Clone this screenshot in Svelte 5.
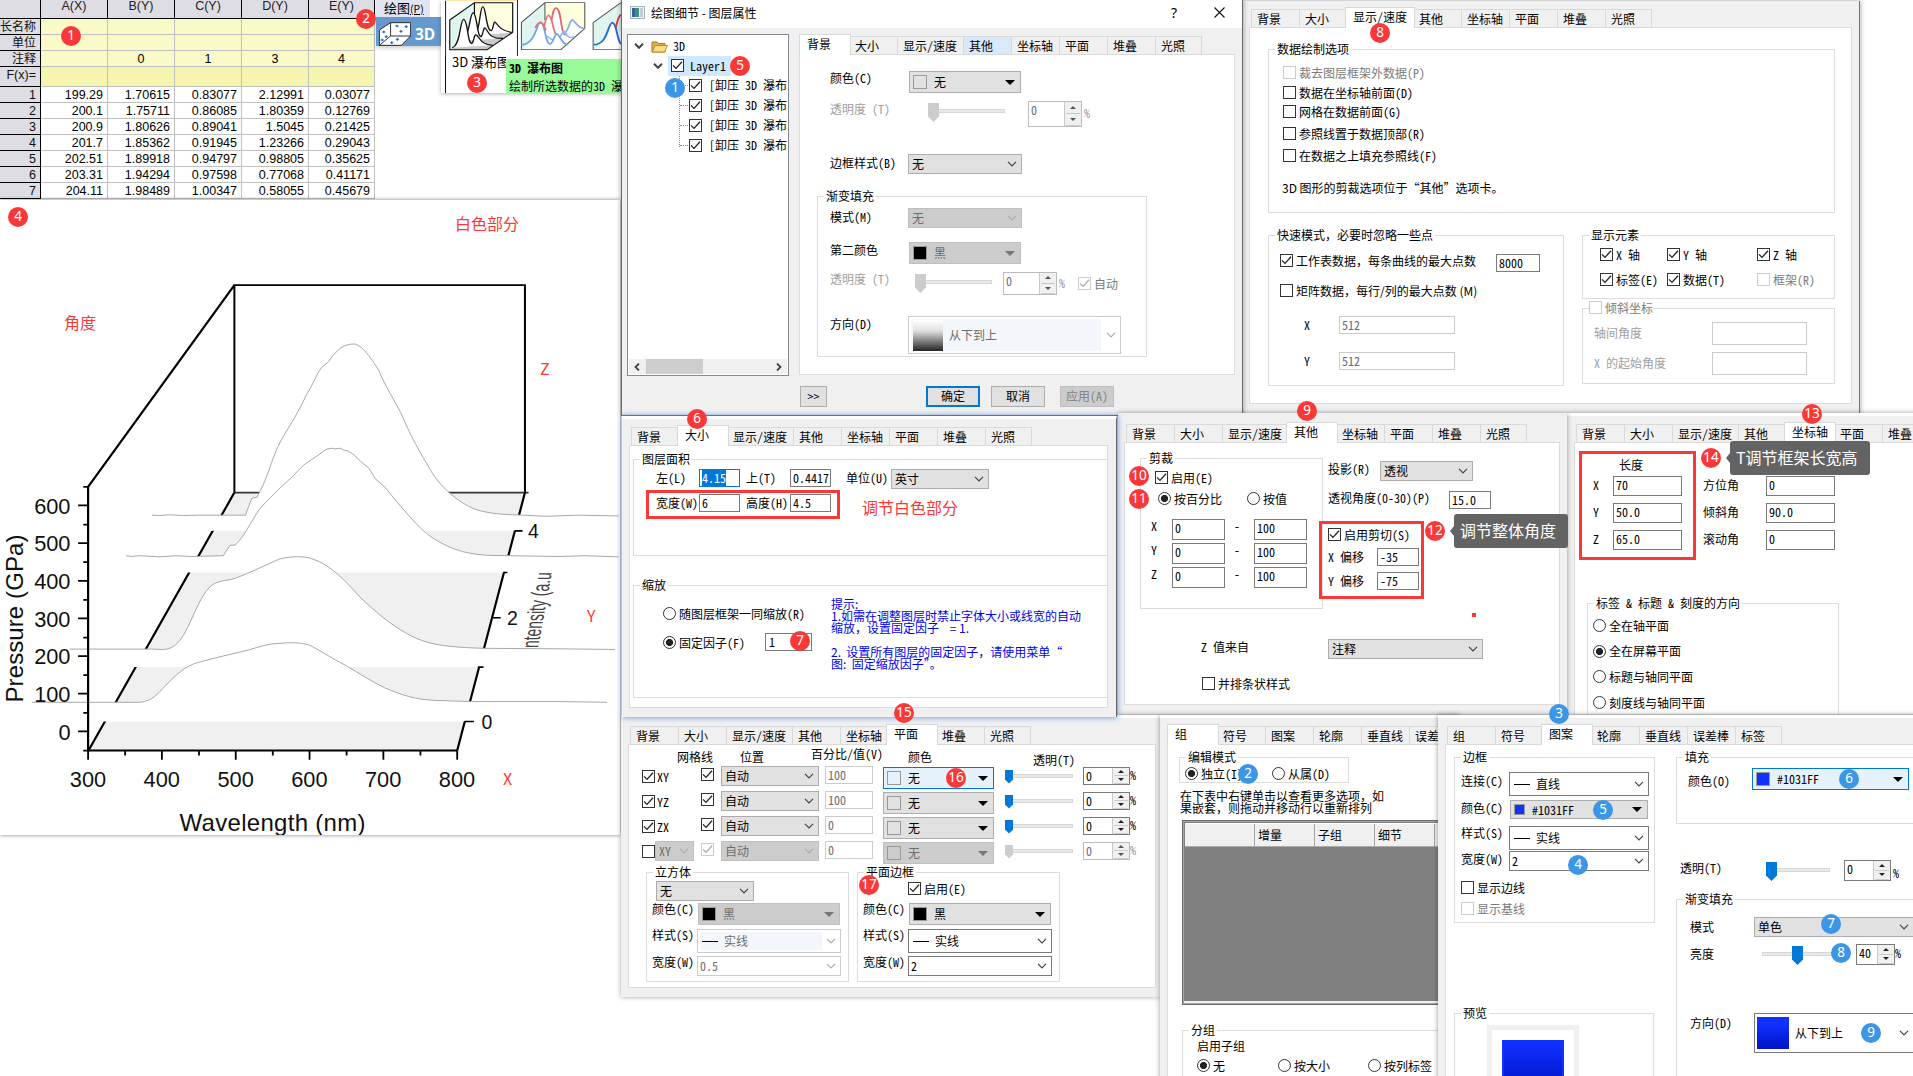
<script>
  const layerTabs = ['背景', '大小', '显示/速度', '其他', '坐标轴', '平面', '堆叠', '光照'];
  const groupTabs = ['组', '符号', '图案', '轮廓', '垂直线', '误差棒'];
  const patternTabs = ['组', '符号', '图案', '轮廓', '垂直线', '误差棒', '标签'];

  const columns = ['A(X)', 'B(Y)', 'C(Y)', 'D(Y)', 'E(Y)'];
  const notes = ['', '0', '1', '3', '4'];
  const data = [
    ['199.29', '1.70615', '0.83077', '2.12991', '0.03077'],
    ['200.1', '1.75711', '0.86085', '1.80359', '0.12769'],
    ['200.9', '1.80626', '0.89041', '1.5045', '0.21425'],
    ['201.7', '1.85362', '0.91945', '1.23266', '0.29043'],
    ['202.51', '1.89918', '0.94797', '0.98805', '0.35625'],
    ['203.31', '1.94294', '0.97598', '0.77068', '0.41171'],
    ['204.11', '1.98489', '1.00347', '0.58055', '0.45679']
  ];

  // Curves of the waterfall plot, back to front: outline, left x, right x, lower edge of the mask
  const curves = [
    { d: 'M381 719 L400 720 L425 718 L460 720 L500 719 L560 719 L616 719 L624 696 L632 675 L645 672 L653 655 C670 622 682 575 695 545 C715 500 740 470 770 402 C785 378 795 350 805 335 L824 318 L835 302 L852 284 L865 276 L880 272 L893 272 L907 281 C925 300 935 315 950 340 C965 380 990 420 1005 450 C1035 525 1060 565 1085 610 C1110 650 1150 685 1190 703 C1230 717 1270 717 1310 719 L1370 722 L1450 719 L1552 721', l: 381, r: 1552, b: 760 },
    { d: 'M316 825 L330 827 L350 825 L400 828 L440 825 L480 827 L560 825 L577 798 L590 797 C610 780 630 735 650 705 C670 680 700 650 735 617 C755 595 760 588 780 575 L800 561 L818 547 L833 544 L840 546 L853 544 L862 549 L875 552 L890 563 L905 579 L925 596 L942 624 L965 645 C1000 690 1040 740 1070 767 C1120 805 1160 820 1225 824 L1400 827 L1470 825 L1552 828', l: 316, r: 1552, b: 869 },
    { d: 'M175 1069 L380 1069 L410 1070 C440 1069 455 1045 472 1010 C490 970 505 930 525 908 C545 888 565 892 590 884 C630 868 670 848 700 834 C730 826 765 825 785 834 C830 848 870 895 905 935 C940 970 980 1005 1020 1028 C1070 1058 1120 1064 1215 1067 L1380 1068 L1543 1070', l: 175, r: 1543, b: 1116 },
    { d: 'M80 1208 L350 1208 C385 1205 395 1185 415 1165 C440 1138 465 1112 497 1104 L540 1092 L625 1071 C650 1063 670 1055 700 1054 C730 1051 755 1052 775 1058 C800 1070 830 1092 868 1112 C900 1132 930 1152 965 1170 C1010 1190 1040 1200 1090 1203 L1180 1206 L1400 1206 L1523 1208', l: 80, r: 1523, b: 1258 }
  ];
  const zTicks = [0, 1, 2, 3, 4, 5, 6];
  const xTicks = [0, 1, 2, 3, 4, 5];

  const planes = [
    { name: 'XY', pct: '100', hot: true },
    { name: 'YZ', pct: '100' },
    { name: 'ZX', pct: '0' },
    { name: 'XY', pct: '0', off: true }
  ];

  const badges = [
    [71, 36, 1], [366, 19, 2], [477, 83, 3], [18, 217, 4], [740, 66, 5], [697, 419, 6], [800, 641, 7],
    [1380, 33, 8], [1307, 411, 9], [1139, 476, 10], [1139, 499, 11], [1435, 531, 12], [1812, 414, 13],
    [1711, 458, 14], [904, 713, 15], [956, 778, 16], [869, 885, 17]
  ];
  const steps = [
    [675, 88, 1], [1248, 774, 2], [1559, 714, 3], [1578, 865, 4], [1603, 810, 5],
    [1849, 779, 6], [1831, 924, 7], [1841, 953, 8], [1871, 1033, 9]
  ];
  const remarks = [
    [455, 214, '白色部分'], [64, 313, '角度'], [540, 359, 'Z'], [587, 606, 'Y'], [503, 769, 'X'], [862, 498, '调节白色部分']
  ];
  const frames = [
    [646, 490, 194, 29], [1319, 521, 105, 78], [1579, 451, 117, 109]
  ];
</script>

{#snippet tabs(list, active, hover = '')}
  <div class="tabs">
    {#each list as t}
      <div class="tab" class:wide={t.length > 4} class:active={t === active} class:hover={t === hover}>{t}</div>
    {/each}
  </div>
{/snippet}

{#snippet mark()}
  <svg width="11" height="11" viewBox="0 0 11 11"><path d="M1 5.4 L4 8.4 L10 1.8" /></svg>
{/snippet}

{#snippet check(text, on, off = false)}
  <span class="opt" class:off class:plain={text.includes('，')}><span class="box">{#if on}{@render mark()}{/if}</span>{text}</span>
{/snippet}

{#snippet radio(text, on)}
  <span class="opt"><span class="ring" class:on></span>{text}</span>
{/snippet}

{#snippet combo(text, cls = '')}
  <span class="combo {cls}">{text}<svg class="chev" width="10" height="6" viewBox="0 0 10 6"><path d="M1 .8 L5 4.8 L9 .8" /></svg></span>
{/snippet}

{#snippet dash(text, cls = '')}
  <span class="combo white tall {cls}"><span class="tint"><i class="stroke"></i>{text}</span><svg class="chev" width="10" height="6" viewBox="0 0 10 6"><path d="M1 .8 L5 4.8 L9 .8" /></svg></span>
{/snippet}

{#snippet colour(text, swatch, cls = '')}
  <span class="combo colour {cls}"><i class="sw {swatch}"></i>{text}<svg class="tri" width="10" height="5" viewBox="0 0 10 5"><path d="M0 0H10L5 5Z" /></svg></span>
{/snippet}

{#snippet slider(length, pos, small = false, off = false)}
  <svg class="slider" class:off width={length} height="20" viewBox="0 0 {length} 20">
    <rect class="track" x=".5" y={small ? 4.5 : 6.5} width={length - 1} height="3" />
    <path class="thumb" d={small ? `M${pos} 0h8v9.5l-4 4l-4-4z` : `M${pos} 0h11v13.5l-5.5 5.5l-5.5-5.5z`} />
  </svg>
{/snippet}

{#snippet spin(value, cls = '')}
  <span class="spin {cls}"><span class="val">{value}</span><span class="arrows">
    <i><svg width="6" height="3" viewBox="0 0 6 3"><path d="M0 3L3 0L6 3Z" /></svg></i>
    <i><svg width="6" height="3" viewBox="0 0 6 3"><path d="M0 0L3 3L6 0Z" /></svg></i>
  </span></span><span class="pct {cls}">%</span>
{/snippet}

<div class="desk">
  <!-- worksheet -->
  <div class="sheet">
    <div class="cell rh head"></div>
    {#each columns as c}<div class="cell head">{c}</div>{/each}
    {#each ['长名称', '单位'] as r}
      <div class="cell rh cn">{r}</div>
      {#each columns as c}<div class="cell note"></div>{/each}
    {/each}
    <div class="cell rh cn">注释</div>
    {#each notes as n}<div class="cell note">{n}</div>{/each}
    <div class="cell rh">F(x)=</div>
    {#each columns as c}<div class="cell note deep"></div>{/each}
    {#each data as row, i}
      <div class="cell rh">{i + 1}</div>
      {#each row as v}<div class="cell num">{v}</div>{/each}
    {/each}
  </div>

  <!-- plot menu -->
  <div class="menu">
    <div class="menu-title">绘图<small>(P)</small></div>
    <div class="menu-item">
      <svg width="32" height="24" viewBox="0 0 80 72" preserveAspectRatio="none">
        <path d="M1 24L29 2H79V42L56 70H1Z" fill="#fff" stroke="#222" stroke-width="2.5" />
        <path d="M29 2V42H79M29 42L1 70" fill="none" stroke="#222" stroke-width="2.5" />
        <path d="M12 26v8M8 30h8M18 40v8M14 44h8M8 50v8M4 54h8M45 8v8M41 12h8M68 10v8M64 14h8M55 24v8M51 28h8M46 48v8M42 52h8M32 58v8M28 62h8" stroke="#1a5fc4" stroke-width="3" />
      </svg>
      <b>3D</b>
    </div>
  </div>

  <div class="gallery">
    <svg class="thumbs" width="180" height="56" viewBox="1106 0 452 168" preserveAspectRatio="none">
      <path d="M1117.500 2V168M1298 0V168" stroke="#00007a" stroke-width="2.500" />
      <path d="M1119 1H1297" stroke="#ffe3a8" stroke-width="4" />
      <g stroke-linejoin="round">
        <path d="M1128 60L1190 8V92L1128 149Z" fill="#dff5f0" />
        <path d="M1190 8H1286V97L1222 92H1190Z" fill="#ffffe0" />
        <path d="M1128 149L1190 92L1286 97L1222 149Z" fill="#c9c9c9" />
        <path d="M1190 92V8H1286V97L1222 149H1128V60L1190 8" fill="none" stroke="#111" stroke-width="3" />
        <path d="M1187 108C1205 100 1203 20 1211 20C1219 20 1219 92 1232 92C1238 90 1237 64 1242 66C1250 78 1256 92 1284 97" fill="#fff" stroke="#111" stroke-width="3.4" />
        <path d="M1160 122C1178 112 1178 38 1187 38C1197 42 1196 112 1207 110C1213 100 1212 82 1217 84C1226 96 1228 118 1262 115" fill="#fff" stroke="#111" stroke-width="3.4" />
        <path d="M1134 143C1156 136 1153 58 1163 58C1174 60 1172 134 1184 130C1190 122 1188 102 1195 105C1206 116 1206 134 1236 136" fill="#fff" stroke="#111" stroke-width="3.4" />
        <path d="M1308 67L1367 8V92L1308 149Z" fill="#dff5f0" />
        <path d="M1367 8H1467V85L1400 92H1367Z" fill="#ffffe0" />
        <path d="M1367 8H1467V85L1407 149H1308V67L1367 8V60" fill="none" stroke="#555" stroke-width="2.6" />
        <path d="M1366 108C1386 104 1382 24 1395 24C1410 28 1405 100 1418 104C1428 96 1428 60 1436 60C1446 68 1448 84 1466 86" fill="#fff" stroke="#e0666e" stroke-width="4.5" />
        <path d="M1412 103C1428 96 1428 60 1436 60C1446 68 1448 84 1466 86" fill="#fff" stroke="#7fb2ee" stroke-width="4.5" />
        <path d="M1338 122C1368 112 1366 46 1376 46C1388 50 1386 110 1402 108" fill="#fff" stroke="#e8747c" stroke-width="4.5" />
        <path d="M1372 108C1392 130 1402 120 1414 92C1424 112 1430 116 1442 110" fill="none" stroke="#8fbcf0" stroke-width="4.5" />
        <path d="M1308 134C1344 134 1346 68 1356 66C1368 70 1368 134 1380 132C1390 126 1390 100 1398 102C1408 112 1408 132 1426 134" fill="#fff" stroke="#6ea3ea" stroke-width="4.5" />
        <path d="M1343 84C1349 66 1362 58 1369 92" fill="none" stroke="#ea6a70" stroke-width="4.5" />
        <path d="M1488 70L1558 10V92L1488 149Z" fill="#dff5f0" />
        <path d="M1558 8L1488 68V149H1558" fill="none" stroke="#555" stroke-width="2.6" />
        <path d="M1530 120C1546 110 1545 52 1558 44" fill="none" stroke="#e5383b" stroke-width="5" />
        <path d="M1490 134C1526 134 1524 68 1537 68C1548 72 1548 122 1558 132" fill="#fff" stroke="#1f6fd6" stroke-width="5" />
      </g>
    </svg>
    <div class="gallery-row">
      <div class="gallery-name">3D 瀑布图</div>
      <div class="hint"><b>3D 瀑布图</b><br />绘制所选数据的3D 瀑</div>
    </div>
  </div>

  <!-- waterfall plot -->
  <div class="plot">
    <svg width="620" height="635" viewBox="0 200 620 635">
      <g transform="translate(0 240) scale(.3986 .3827)">
        <path d="M588 660V118H1317V660" fill="none" stroke="#000" stroke-width="5" />
        <path d="M222 1334L588 660H1317L1147 1334Z" fill="#f0f0f0" />
        <path d="M588 660H1326" stroke="#3a3336" stroke-width="5" />
        <path d="M222 1334L588 660M1147 1334L1317 660" stroke="#000" stroke-width="5.5" />
      </g>
      <text class="intensity" transform="matrix(.107 -.58 1 0 538 648)">ntensity (a.u</text>
      <g transform="translate(0 240) scale(.3986 .3827)">
        {#each curves as c}
          <path d="{c.d} V{c.b} H{c.l} Z" fill="#fff" />
          <path d={c.d} fill="none" stroke="#a2a2a2" stroke-width="2.4" />
        {/each}
        <path d="M588 118L221 645V1334H1147" fill="none" stroke="#000" stroke-width="5.5" />
        {#each zTicks as t}
          <path d="M196 {1284 - t * 98.4}H221M209 {1334 - t * 98.4}H221" stroke="#000" stroke-width="4.6" />
        {/each}
        <path d="M209 645H221" stroke="#000" stroke-width="4.6" />
        {#each xTicks as t}
          <path d="M{221 + t * 185.2} 1334V1358" stroke="#000" stroke-width="4.6" />
          {#if t < 5}<path d="M{314 + t * 185.2} 1334V1347" stroke="#000" stroke-width="4.6" />{/if}
        {/each}
        <path d="M1291 760H1311M1262 869H1273M1232 987H1256M1199 1116H1213M1165 1258H1189" stroke="#000" stroke-width="4.2" />
      </g>
      {#each zTicks as t}
        <text class="tick end" x="70.5" y={739.5 - t * 37.66}>{t * 100}</text>
      {/each}
      {#each xTicks as t}
        <text class="tick mid" x={88 + t * 73.8} y="787">{300 + t * 100}</text>
      {/each}
      <text class="tick side" x="528" y="538">4</text>
      <text class="tick side" x="507" y="625">2</text>
      <text class="tick side" x="481.500" y="728.500">0</text>
      <text class="title" x="179.500" y="831" textLength="186">Wavelength (nm)</text>
      <text class="title" transform="translate(23 702.500) rotate(-90)" textLength="168">Pressure (GPa)</text>
    </svg>
  </div>

  <!-- display / speed -->
  <div class="win w-display">
    {@render tabs(layerTabs, '显示/速度')}
    <div class="page">
      <fieldset class="draw-options">
        <legend>数据绘制选项</legend>
        {@render check('裁去图层框架外数据(P)', false, true)}
        {@render check('数据在坐标轴前面(D)', false)}
        {@render check('网格在数据前面(G)', false)}
        {@render check('参照线置于数据顶部(R)', false)}
        {@render check('在数据之上填充参照线(F)', false)}
        <span class="clip-note plain">3D 图形的剪裁选项位于“其他”选项卡。</span>
      </fieldset>
      <div class="display-cols">
        <fieldset class="speed">
          <legend class="plain">快速模式，必要时忽略一些点</legend>
          <div class="speed-row">{@render check('工作表数据，每条曲线的最大点数', true)}<span class="field w44">8000</span></div>
          {@render check('矩阵数据，每行/列的最大点数 (M)', false)}
          <div class="speed-grid">
            <span>X</span><span class="field off">512</span>
            <span>Y</span><span class="field off">512</span>
          </div>
        </fieldset>
        <div class="display-right">
          <fieldset class="elements">
            <legend>显示元素</legend>
            {@render check('X 轴', true)}{@render check('Y 轴', true)}{@render check('Z 轴', true)}
            {@render check('标签(E)', true)}{@render check('数据(T)', true)}{@render check('框架(R)', false, true)}
          </fieldset>
          <fieldset class="oblique">
            <legend>{@render check('倾斜坐标', false, true)}</legend>
            <span>轴间角度</span><span class="field off"></span>
            <span>X 的起始角度</span><span class="field off"></span>
          </fieldset>
        </div>
      </div>
    </div>
  </div>

  <!-- main dialog -->
  <div class="win w-main">
    <div class="titlebar">
      <svg width="15" height="13" viewBox="0 0 15 13"><rect x=".5" y=".5" width="14" height="12" fill="#eef2f5" stroke="#a9b4bf" /><rect x="2" y="2" width="7" height="9" fill="#3f8f86" /><rect x="2" y="2" width="3" height="9" fill="#33658f" /><rect x="10" y="2" width="3" height="9" fill="#c4ccd4" /></svg>
      <span class="title-text">绘图细节 - 图层属性</span>
      <span class="help">?</span>
      <svg class="close" width="11" height="11" viewBox="0 0 11 11"><path d="M.5 .5L10.500 10.500M10.500 .5L.5 10.500" stroke="#111" stroke-width="1.100" /></svg>
    </div>
    <div class="main-body">
      <div class="tree">
        <div class="node root"><svg class="chev" width="10" height="6" viewBox="0 0 10 6"><path d="M1 .8 L5 4.8 L9 .8" /></svg>
          <svg width="17" height="13" viewBox="0 0 17 13"><path d="M1 12V2H6L7.500 3.500H14V12Z" fill="#e3b04a" stroke="#a87820" /><path d="M1 12L4 5.500H16.500L13.500 12Z" fill="#fbdc86" stroke="#b88a30" /></svg>3D</div>
        <div class="node layer"><svg class="chev" width="10" height="6" viewBox="0 0 10 6"><path d="M1 .8 L5 4.8 L9 .8" /></svg><span class="picked">{@render check('Layer1', true)}</span></div>
        <div class="leaves">
          {#each [1, 2, 3, 4] as n}
            <div class="leaf">{@render check('[卸压 3D 瀑布', true)}</div>
          {/each}
        </div>
        <div class="hscroll">
          <svg width="6" height="8" viewBox="0 0 6 8"><path d="M5 0.500L1.500 4L5 7.500" /></svg><i></i>
          <svg width="6" height="8" viewBox="0 0 6 8"><path d="M1 0.500L4.500 4L1 7.500" /></svg>
        </div>
      </div>
      <div class="main-right">
        {@render tabs(layerTabs, '背景', '其他')}
        <div class="page">
          <div class="form-a">
            <span class="top">颜色(C)</span>{@render colour('无', 'none', 'w112')}
            <span class="dim up">透明度 (T)</span><div class="inline s1">{@render slider(77, 0, false, true)}{@render spin('0', 'off big')}</div>
            <span>边框样式(B)</span>{@render combo('无', 'w114')}
          </div>
          <fieldset class="gradient">
            <legend>渐变填充</legend>
            <span>模式(M)</span>{@render combo('无', 'w114 off')}
            <span class="up">第二颜色</span>{@render colour('黑', 'black', 'w112 off')}
            <span class="dim top">透明度 (T)</span><div class="inline s2">{@render slider(77, 0, false, true)}{@render spin('0', 'off')}{@render check('自动', true, true)}</div>
            <span class="up">方向(D)</span><span class="combo white off dir"><span class="tint"><i class="grad"></i>从下到上</span><svg class="chev" width="10" height="6" viewBox="0 0 10 6"><path d="M1 .8 L5 4.8 L9 .8" /></svg></span>
          </fieldset>
        </div>
      </div>
    </div>
    <div class="buttons"><span class="btn more">&gt;&gt;</span><span class="btn ok">确定</span><span class="btn">取消</span><span class="btn apply">应用(A)</span></div>
  </div>

  <!-- axis -->
  <div class="win w-axis">
    {@render tabs(layerTabs, '坐标轴')}
    <div class="page">
      <div class="length-title">长度</div>
      <div class="axis-grid">
        {#each [['X', '70', '方位角', '0'], ['Y', '50.0', '倾斜角', '90.0'], ['Z', '65.0', '滚动角', '0']] as r}
          <span>{r[0]}</span><span class="field">{r[1]}</span><span class="angle-name">{r[2]}</span><span class="field">{r[3]}</span>
        {/each}
      </div>
      <fieldset class="orient">
        <legend>标签 &amp; 标题 &amp; 刻度的方向</legend>
        {@render radio('全在轴平面', false)}
        {@render radio('全在屏幕平面', true)}
        {@render radio('标题与轴同平面', false)}
        {@render radio('刻度线与轴同平面', false)}
      </fieldset>
    </div>
  </div>

  <!-- other -->
  <div class="win w-other">
    {@render tabs(layerTabs, '其他')}
    <div class="page">
      <div class="other-cols">
        <fieldset class="clip">
          <legend>剪裁</legend>
          {@render check('启用(E)', true)}
          <div class="by">{@render radio('按百分比', true)}{@render radio('按值', false)}</div>
          <div class="ranges">
            {#each ['X', 'Y', 'Z'] as a}
              <span>{a}</span><span class="field">0</span><span class="to">-</span><span class="field">100</span>
            {/each}
          </div>
        </fieldset>
        <div class="other-right">
          <div class="proj"><span>投影(R)</span>{@render combo('透视', 'w93')}</div>
          <div class="angle"><span>透视角度(0-30)(P)</span><span class="field">15.0</span></div>
          <div class="shear">
            {@render check('启用剪切(S)', true)}
            <div class="offset"><span>X 偏移</span><span class="field">-35</span></div>
            <div class="offset"><span>Y 偏移</span><span class="field">-75</span></div>
          </div>
        </div>
      </div>
      <div class="zfrom"><span>Z 值来自</span>{@render combo('注释', 'w155')}</div>
      <div class="bars">{@render check('并排条状样式', false)}</div>
    </div>
  </div>

  <!-- plane -->
  <div class="win w-plane">
    {@render tabs(layerTabs, '平面')}
    <div class="page">
      <div class="plane-head"><span>网格线</span><span>位置</span><span>百分比/值(V)</span><span>颜色</span><span>透明(T)</span></div>
      <div class="plane-grid">
        {#each planes as p}
          <div class="plane-name">{#if p.off}{@render check('', false)}{@render combo(p.name, 'w39 off')}{:else}{@render check(p.name, true)}{/if}</div>
          <div class="plane-line">{@render check('', true, p.off)}</div>
          {@render combo('自动', p.off ? 'w98 off' : 'w98')}
          <span class="field off">{p.pct}</span>
          {@render colour('无', 'none', p.off ? 'w111 off' : p.hot ? 'w111 hot' : 'w111')}
          <div class="inline plane-slider">{@render slider(68, 0, true, p.off)}{@render spin('0', p.off ? 'small off' : 'small')}</div>
        {/each}
      </div>
      <div class="plane-sets">
        <fieldset class="frame-set">
          <legend>立方体</legend>
          <div class="frame-top">{@render combo('无', 'w98')}</div>
          <span>颜色(C)</span>{@render colour('黑', 'black', 'w142 off')}
          <span>样式(S)</span>{@render dash('实线', 'off')}
          <span>宽度(W)</span>{@render combo('0.5', 'white off')}
        </fieldset>
        <fieldset class="frame-set">
          <legend>平面边框</legend>
          <div class="frame-top second">{@render check('启用(E)', true)}</div>
          <span>颜色(C)</span>{@render colour('黑', 'black', 'w142')}
          <span>样式(S)</span>{@render dash('实线')}
          <span>宽度(W)</span>{@render combo('2', 'white')}
        </fieldset>
      </div>
    </div>
  </div>

  <!-- size -->
  <div class="win w-size">
    {@render tabs(layerTabs, '大小')}
    <div class="page">
      <fieldset class="area">
        <legend>图层面积</legend>
        <span>左(L)</span><span class="field focus"><mark>4.15</mark></span><span>上(T)</span><span class="field">0.4417</span><span>单位(U)</span>{@render combo('英寸', 'w98')}
        <span>宽度(W)</span><span class="field">6</span><span>高度(H)</span><span class="field">4.5</span>
      </fieldset>
      <fieldset class="scale">
        <legend>缩放</legend>
        <div class="scale-cols">
          <div class="scale-opts">
            {@render radio('随图层框架一同缩放(R)', false)}
            <div class="factor">{@render radio('固定因子(F)', true)}<span class="field">1</span></div>
          </div>
          <div class="tips plain">提示:<br />1.如需在调整图层时禁止字体大小或线宽的自动<br />缩放，设置固定因子&nbsp;&nbsp;&nbsp; = 1.<br /><br />2.&nbsp; 设置所有图层的固定因子，请使用菜单“<br />图: &nbsp;固定缩放因子”。</div>
        </div>
      </fieldset>
    </div>
  </div>

  <!-- group -->
  <div class="win w-group">
    {@render tabs(groupTabs, '组')}
    <div class="page">
      <fieldset class="edit-mode"><legend>编辑模式</legend><div class="inline">{@render radio('独立(I)', true)}{@render radio('从属(D)', false)}</div></fieldset>
      <div class="para plain">在下表中右键单击以查看更多选项，如<br />果嵌套，则拖动并移动行以重新排列</div>
      <div class="list"><div class="list-head"><span class="first"></span><span>增量</span><span>子组</span><span>细节</span></div></div>
      <fieldset class="subgroup">
        <legend>分组</legend>
        <div class="sub-title">启用子组</div>
        <div class="sub-opts">{@render radio('无', true)}{@render radio('按大小', false)}{@render radio('按列标签', false)}</div>
      </fieldset>
    </div>
  </div>

  <!-- pattern -->
  <div class="win w-pattern">
    {@render tabs(patternTabs, '图案')}
    <div class="page pattern-page">
      <div class="pattern-left">
        <fieldset class="border-set">
          <legend>边框</legend>
          <span class="join">连接(C)</span>{@render dash('直线')}
          <span>颜色(C)</span>{@render colour('#1031FF', 'blue', 'low')}
          <span class="style-name">样式(S)</span>{@render dash('实线')}
          <span>宽度(W)</span>{@render combo('2', 'white')}
          <div class="wide-cell">{@render check('显示边线', false)}</div>
          <div class="wide-cell">{@render check('显示基线', false, true)}</div>
        </fieldset>
        <fieldset class="preview"><legend>预览</legend><div class="preview-frame"><i></i></div></fieldset>
      </div>
      <div class="pattern-right">
        <fieldset class="fill-set"><legend>填充</legend><div class="inline"><span>颜色(O)</span>{@render colour('#1031FF', 'blue', 'hot w157')}</div></fieldset>
        <div class="alpha"><span>透明(T)</span>{@render slider(64, 0)}{@render spin('0', 'mid')}</div>
        <fieldset class="grad-set">
          <legend>渐变填充</legend>
          <span>模式</span>{@render combo('单色')}
          <span>亮度</span><div class="inline lum">{@render slider(78, 30)}{@render spin('40', 'narrow')}</div>
          <span>方向(D)</span><span class="combo white dir blue-dir"><i class="grad"></i>从下到上<svg class="chev" width="10" height="6" viewBox="0 0 10 6"><path d="M1 .8 L5 4.8 L9 .8" /></svg></span>
        </fieldset>
      </div>
    </div>
  </div>

  <!-- annotations -->
  {#each frames as [x, y, w, h]}
    <div class="frame" style="left:{x}px;top:{y}px;width:{w}px;height:{h}px"></div>
  {/each}
  {#each remarks as [x, y, t]}
    <div class="remark" style="left:{x}px;top:{y}px">{t}</div>
  {/each}
  <div class="dot"></div>
  <div class="tip tip-angle">调节整体角度</div>
  <div class="tip tip-size">T调节框架长宽高</div>
  {#each badges as [x, y, n]}
    <div class="badge" style="left:{x - 10}px;top:{y - 10}px">{n}</div>
  {/each}
  {#each steps as [x, y, n]}
    <div class="badge step" style="left:{x - 10}px;top:{y - 10}px">{n}</div>
  {/each}
</div>

<style>
  :global(body) { margin: 0; background: #fff; overflow: hidden; }
  .desk {
    position: relative; width: 1913px; height: 1076px; overflow: hidden; background: #fff; color: #000;
    font: 12px/14px "Noto Sans CJK SC", sans-serif; font-feature-settings: "hwid"; white-space: nowrap;
  }
  .desk :global(*) { box-sizing: border-box; }
  i { font-style: normal; }
  .plain { font-feature-settings: normal; }

  /* worksheet */
  .sheet {
    position: absolute; left: 0; top: 0; width: 375px; height: 199px; overflow: hidden;
    display: grid; grid-template-columns: 41px 67px 67px 67px 67px 66px;
    grid-template-rows: 19px 16px 16px 16px 20px repeat(7, 16px);
    font: 12.5px/16px "Liberation Sans", "Noto Sans CJK SC", sans-serif; font-feature-settings: normal;
  }
  .cell { border-right: 1px solid #c0c0c0; border-bottom: 1px solid #c0c0c0; text-align: center; white-space: nowrap; }
  .cell.head { background: #dedde3; border-right-color: #000; border-bottom-color: #000; line-height: 12px; color: #222; }
  .cell.rh { background: #dedde3; text-align: right; padding-right: 4px; border-color: #000; color: #111; }
  .cell.cn { font-size: 12px; padding-right: 4px; direction: rtl; }
  .cell.note { background: #fafac8; }
  .cell.deep { background: #f5f5b0; }
  .cell.num { text-align: right; padding-right: 4px; background: #fff; }

  .menu { position: absolute; left: 376px; top: 0; width: 65px; box-shadow: 0 2px 4px rgba(0,0,0,.2); background: #fff; }
  .menu-title { width: 54px; height: 17px; padding-left: 8px; line-height: 15px; font-size: 13px; background: #e1e5f3; font-feature-settings: normal; }
  .menu-title small { font-size: 10.500px; text-decoration: underline; }
  .menu-item { height: 29px; background: #6699cd; display: flex; gap: 4px; padding: 5px 0 0 3px; align-items: flex-start; color: #fff; }
  .menu-item b { font: bold 15.500px/24px "Open Sans", sans-serif; font-feature-settings: normal; }

  .gallery { position: absolute; left: 441px; top: 0; width: 180px; height: 93px; overflow: hidden; background: #fff; box-shadow: 0 1px 4px rgba(0,0,0,.3); }
  .thumbs { display: block; }
  .gallery-row { display: flex; height: 37px; align-items: flex-start; }
  .gallery-name { width: 65px; height: 37px; padding-left: 11px; overflow: hidden; font: 13px/12px "Noto Sans CJK SC", sans-serif; font-feature-settings: normal; background: linear-gradient(90deg, #fff 4px, #00007a 4px, #00007a 5px, #fff 5px); }
  .hint { margin-top: 3px; height: 34px; flex: 1; overflow: hidden; padding: 0 0 0 3px; background: #98fb98; line-height: 18px; }

  .plot { position: absolute; left: 0; top: 200px; width: 620px; height: 635px; background: #fff; box-shadow: 0 0 4px rgba(0,0,0,.5); clip-path: inset(-4px -1px -5px 0); }
  .plot svg { display: block; }
  .plot text { font-family: "Liberation Sans", sans-serif; fill: #111; font-feature-settings: normal; }
  .plot .tick { font-size: 21.800px; }
  .plot .side { font-size: 19.500px; }
  .plot .end { text-anchor: end; }
  .plot .mid { text-anchor: middle; }
  .plot .title { font-size: 24px; }
  .plot .intensity { font-size: 24px; fill: #444; }

  /* windows */
  .win { position: absolute; background: #f0f0f0; box-shadow: 0 0 5px rgba(0,0,0,.4); overflow: hidden; }
  .w-main { left: 621px; top: 0; width: 622px; height: 416px; border: solid #6b6b6b; border-width: 0 1px 1px; }
  .w-display { left: 1242px; top: 1px; width: 618px; height: 412px; padding: 6px 7px 0 6px; border-right: 1px solid #777; border-left: 1px solid #777; }
  .w-size { left: 622px; top: 416px; width: 495px; height: 301px; padding: 6px 8px 0 7px; box-shadow: 0 0 6px #4f80cf; border-top: 3px solid #fff; border-right: 1px solid #666; }
  .w-other { left: 1118px; top: 413px; width: 449px; height: 301px; padding: 9px 7px 0 6px; }
  .w-axis { left: 1567px; top: 413px; width: 360px; height: 301px; padding: 6px 0 0 7px; border-top: 3px solid #fff; }
  .w-plane { left: 621px; top: 715px; width: 540px; height: 282px; padding: 6px 5px 0 7px; border-top: 3px solid #fff; box-shadow: 0 0 5px rgba(0,0,0,.35); }
  .w-group { left: 1160px; top: 715px; width: 300px; height: 380px; padding: 6px 0 0 7px; border-top: 3px solid #fff; }
  .w-pattern { left: 1438px; top: 715px; width: 500px; height: 380px; padding: 6px 0 0 7px; border-top: 3px solid #fff; }

  .tabs { display: flex; align-items: flex-end; height: 21px; padding-left: 2px; margin-bottom: -1px; position: relative; }
  .tab { width: 48px; height: 19px; padding: 2px 0 0 5px; border: 1px solid #d9d9d9; border-right: 0; flex: none; }
  .tab.wide { width: 66px; }
  .tab:last-child { width: 47px; border-right: 1px solid #d9d9d9; }
  .tab.hover { background: #d8eaf9; }
  .tab.active { width: 52px; height: 21px; margin: 0 -2px; padding: 2px 0 0 7px; background: #fff; border-right: 1px solid #d9d9d9; border-bottom: 0; position: relative; }
  .tab.active.wide { width: 70px; }
  .page { background: #fff; border: 1px solid #dcdcdc; }
  .w-display .page { height: 377px; }
  .w-size .page { height: 263px; }
  .w-other .page { height: 263px; }
  .w-axis .page { height: 300px; }
  .w-plane .page { height: 244px; }
  .w-group .page, .w-pattern .page { height: 400px; }

  fieldset { --pt: 0px; --pl: 0px; border: 1px solid #dcdcdc; padding: var(--pt) 0 0 var(--pl); margin: 0; min-width: 0; }
  legend { padding: 0 2px; margin-left: calc(6px - var(--pl)); height: 14px; line-height: 14px; }
  .up { margin-top: 1px !important; }
  .top { margin-top: 0 !important; }
  .dim { color: #a0a0a0; }
  .inline { display: flex; align-items: flex-start; }

  /* controls */
  .opt { display: flex; align-items: center; gap: 3px; height: 13px; line-height: 14px; flex: none; }
  .opt.off { color: #7a7a7a; }
  .box { width: 13px; height: 13px; border: 1px solid #333; background: #fff; flex: none; }
  .box svg { display: block; fill: none; stroke: #222; stroke-width: 1.300; }
  .off .box { border-color: #ccc; }
  .off .box svg { stroke: #aaa; }
  .ring { width: 13px; height: 13px; border: 1px solid #333; border-radius: 50%; background: #fff; flex: none; }
  .ring.on { background: radial-gradient(circle, #222 3.200px, #fff 3.900px); }
  .combo { display: flex; align-items: center; height: 20px; padding: 0 4px 0 3px; border: 1px solid #adadad; background: #e1e1e1; line-height: 14px; }
  .combo .chev, .combo .tri { margin-left: auto; flex: none; }
  .chev { fill: none; stroke: #444; stroke-width: 1.200; }
  .combo.off { background: #ccc; border-color: #bfbfbf; color: #6d6d6d; }
  .combo.off .chev { stroke: #aaa; }
  .combo.white { background: #fff; border-color: #7a7a7a; padding-left: 2px; }
  .combo.white.off { border-color: #ccc; }
  .combo.tall { height: 24px; }
  .combo.tall .tint { display: flex; align-items: center; gap: 6px; height: 18px; padding-left: 2px; width: 122px; }
  .off .tint { background: #f3f7fc; }
  .stroke { width: 16px; height: 1px; background: #000; }
  .colour { height: 22px; padding: 0 5px 0 3px; }
  .colour .sw { width: 14px; height: 14px; border: 1px solid #999; margin-right: 7px; flex: none; }
  .colour .tri { fill: #000; }
  .colour.off .tri { fill: #777; }
  .colour.hot { background: #e5f1fb; border-color: #0078d7; }
  .colour .sw.black { background: #000; }
  .colour .sw.blue { background: #1031ff; }
  .colour.low { height: 19px; }
  .colour.low .sw { width: 11px; height: 11px; }
  .w112 { width: 112px; margin-left: 1px; }
  .w114 { width: 114px; }
  .w111 { width: 111px; }
  .w98 { width: 98px; }
  .w93 { width: 93px; }
  .w155 { width: 155px; }
  .w39 { width: 39px; }
  .w142 { width: 142px; margin-left: 1px; }
  .w157 { width: 157px; }
  .field { display: block; height: 18px; padding: 1px 2px; border: 1px solid #7a7a7a; background: #fff; line-height: 14px; }
  .field.off { border-color: #ccc; color: #6d6d6d; }
  .field.focus { border-color: #0078d7; }
  .field mark { background: #0078d7; color: #fff; }
  .w44 { width: 44px; }
  .slider { display: block; flex: none; }
  .track { fill: #e7eaea; stroke: #d6d6d6; }
  .thumb { fill: #0078d7; }
  .slider.off .thumb { fill: #ccc; }
  .spin { display: flex; width: 54px; height: 23px; border: 1px solid #7a7a7a; background: #fff; flex: none; }
  .spin.off { border-color: #bbb; color: #6d6d6d; }
  .spin.big { height: 26px; }
  .spin.small { width: 47px; height: 18px; }
  .spin.mid { width: 47px; height: 21px; }
  .spin.narrow { width: 39px; height: 21px; }
  .val { flex: 1; padding: 1px 0 0 2px; }
  .arrows { width: 17px; display: flex; flex-direction: column; background: #f0f0f0; border-left: 1px solid #c8c8c8; }
  .arrows i { flex: 1; min-height: 0; margin: 0 1px; border: 1px solid #ccc; border-width: 0 0 1px; display: flex; align-items: center; justify-content: center; }
  .arrows svg { fill: #222; display: block; }
  .off .arrows svg { fill: #555; }
  .pct { margin-left: 2px; margin-top: 4px; }
  .pct.small { margin-top: 1px; margin-left: 0; }
  .pct.off { color: #999; }
  .pct.narrow { margin-left: 0; margin-top: 2px; }

  /* main dialog */
  .titlebar { height: 28px; display: flex; align-items: center; background: #fff; padding: 0 17px 3px 8px; }
  .title-text { margin-left: 6px; font-feature-settings: normal; line-height: 16px; flex: 1; }
  .help { font: 14px/16px "Noto Sans", sans-serif; margin-right: 37px; }
  .main-body { display: flex; align-items: flex-start; padding-left: 5px; }
  .tree { width: 162px; height: 342px; margin: 6px 10px 0 0; border: 1px solid #828790; background: #fff; overflow: hidden; display: flex; flex-direction: column; padding: 1px; }
  .node { height: 20px; display: flex; align-items: center; flex: none; }
  .tree .chev { stroke-width: 2; stroke: #444; }
  .root { padding-left: 5px; gap: 5px; }
  .root .chev { margin-right: 2px; }
  .layer { padding-left: 24px; }
  .picked { margin-left: 5px; height: 20px; width: 63px; padding: 3px 0 0 3px; background: #cde8ff; }
  .picked .opt { gap: 6px; }
  .leaf .opt { gap: 7px; }
  .leaves { margin-left: 50px; border-left: 1px dotted #888; height: 71px; flex: none; }
  .leaf { height: 20px; display: flex; align-items: center; margin-top: -1px; margin-bottom: 1px; }
  .leaf::before { content: ""; width: 11px; border-top: 1px dotted #888; margin-right: 1px; }
  .hscroll { margin-top: auto; height: 15px; background: #f0f0f0; display: flex; align-items: center; padding: 0 5px; flex: none; }
  .hscroll i { width: 57px; height: 15px; background: #cdcdcd; margin: 0 auto 0 6px; }
  .hscroll svg { fill: none; stroke: #444; stroke-width: 1.800; }
  .main-right { width: 436px; padding-top: 6px; }
  .main-right .page { height: 321px; }
  .form-a { display: grid; grid-template-columns: 78px 1fr; grid-template-rows: 30px 53px 35px; padding: 16px 0 0 30px; align-items: start; justify-items: start; }
  .form-a > span:not(.combo), .gradient > span:not(.combo) { margin-top: 2px; }
  .s1 { padding-left: 20px; }
  .s1 > :global(svg) { margin: 2px 23px 0 0; }
  .s1 .pct { margin-top: 5px; }
  .gradient { --pt: 5px; --pl: 12px; margin-left: 17px; width: 330px; height: 168px; display: grid; grid-template-columns: 78px 1fr; grid-template-rows: 34px 30px 44px 38px; align-items: start; justify-items: start; align-content: start; }
  .s2 { padding-left: 7px; }
  .s2 > :global(svg) { margin: 2px 11px 0 0; }
  .s2 .opt { margin: 5px 0 0 13px; }
  .dir { width: 213px; height: 38px; padding: 0 4px 0 2px; }
  .dir .tint { width: 190px; height: 32px; display: flex; align-items: center; padding-left: 2px; }
  .dir .grad { width: 30px; height: 31px; margin-right: 6px; background: linear-gradient(#fff, #e0e0e0 35%, #222); }
  .buttons { display: flex; padding: 10px 0 0 178px; }
  .btn { width: 54px; height: 21px; border: 1px solid #adadad; background: #e1e1e1; text-align: center; line-height: 18px; margin-right: 15px; }
  .btn.more { width: 27px; margin-right: 99px; }
  .btn.ok { border: 2px solid #0078d7; line-height: 16px; margin-right: 11px; }
  .btn.apply { background: #ccc; border-color: #bfbfbf; color: #838383; }

  /* display */
  .draw-options { --pt: 10px; --pl: 14px; margin: 14px 0 0 18px; width: 567px; height: 171px; }
  .draw-options .opt { margin-bottom: 6px; }
  .draw-options .opt:nth-of-type(1) { margin-bottom: 7px; }
  .draw-options .opt:nth-of-type(3) { margin-bottom: 9px; }
  .draw-options .opt:nth-of-type(4) { margin-bottom: 9px; }
  .clip-note { display: block; margin-top: 19px; margin-left: -1px; }
  .display-cols { display: flex; gap: 18px; padding: 15px 0 0 18px; align-items: flex-start; }
  .speed { --pt: 12px; --pl: 11px; width: 296px; height: 158px; }
  .speed-row { display: flex; height: 30px; justify-content: space-between; padding-right: 23px; }
  .speed-grid { display: grid; grid-template-columns: 35px 116px; grid-auto-rows: 36px; margin: 19px 0 0 24px; align-items: start; }
  .speed-grid span:not(.field) { padding-top: 2px; }
  .display-right { width: 253px; }
  .elements { --pt: 6px; --pl: 17px; height: 71px; display: grid; grid-template-columns: 67px 90px 80px; grid-auto-rows: 25px; align-content: start; }
  .oblique { --pt: 7px; --pl: 11px; margin-top: 2px; height: 83px; display: grid; grid-template-columns: 118px 95px; grid-auto-rows: 30px; color: #a0a0a0; align-items: start; align-content: start; }
  .oblique legend { padding: 0; }
  .oblique > span { padding-top: 4px; }
  .oblique .field { height: 23px; }

  /* size */
  .area { --pt: 3px; --pl: 22px; margin: 6px 0 0 3px; width: 475px; height: 104px; display: grid; grid-template-columns: 43px 41px 6px 44px 41px 15px 45px 98px; grid-auto-rows: 25px; align-items: start; align-content: start; }
  .area > span:nth-of-type(1), .area > span:nth-of-type(7) { grid-column: 1; }
  .area > span:nth-of-type(3), .area > span:nth-of-type(9) { grid-column: 4; }
  .area > span:nth-of-type(5) { grid-column: 7; }
  .area > span:not(.field):not(.combo) { margin-top: 2px; }
  .scale { --pt: 6px; --pl: 29px; margin: 22px 0 0 3px; width: 475px; height: 120px; }
  .scale-cols { display: flex; align-items: flex-start; }
  .scale-opts { width: 168px; padding-top: 9px; }
  .factor { display: flex; align-items: flex-start; justify-content: space-between; margin-top: 13px; padding-right: 19px; }
  .factor .opt { margin-top: 3px; }
  .factor .field { width: 47px; padding-left: 3px; }
  .tips { color: #0000f0; line-height: 12px; }

  /* other */
  .other-cols { display: flex; height: 166px; align-items: flex-start; }
  .clip { --pt: 6px; --pl: 14px; margin: 8px 0 0 15px; width: 183px; height: 158px; }
  .by { display: flex; margin: 8px 0 0 3px; gap: 25px; }
  .by .opt:first-child { width: 64px; }
  .ranges { display: grid; grid-template-columns: 21px 53px 29px 53px; grid-auto-rows: 24px; margin: 14px 0 0 -4px; align-items: start; }
  .ranges .field { height: 21px; }
  .to { padding-left: 9px; }
  .other-right { padding-left: 5px; }
  .proj { display: flex; margin-top: 18px; height: 30px; }
  .proj > span:first-child { width: 52px; padding-top: 1px; }
  .angle { display: flex; height: 37px; }
  .angle > span:first-child { width: 121px; }
  .angle .field { width: 42px; }
  .offset { display: flex; height: 24px; }
  .shear .opt { margin-bottom: 7px; }
  .offset > span:first-child { width: 49px; padding-top: 2px; }
  .offset .field { width: 42px; }
  .zfrom { display: flex; padding: 30px 0 0 76px; height: 68px; }
  .zfrom > span:first-child { width: 127px; padding-top: 1px; }
  .bars { padding-left: 77px; }

  /* axis */
  .length-title { padding: 15px 0 0 44px; height: 33px; }
  .axis-grid { display: grid; grid-template-columns: 20px 69px 84px 69px; grid-auto-rows: 27px; padding-left: 18px; align-items: start; }
  .axis-grid .field { height: 20px; }
  .axis-grid span:not(.field) { padding-top: 2px; }
  .axis-grid .angle-name { padding-left: 21px; }
  .orient { --pt: 9px; --pl: 5px; margin: 39px 0 0 12px; width: 252px; height: 130px; }
  .orient .opt { margin-bottom: 12.700px; }

  /* plane */
  .plane-head { display: flex; height: 21px; padding: 4px 0 0 48px; }
  .plane-head span { width: 66px; padding-top: 1px; flex: none; }
  .plane-head span:nth-child(1) { width: 63px; }
  .plane-head span:nth-child(2) { width: 71px; }
  .plane-head span:nth-child(3) { width: 97px; padding-top: 0; margin-top: -2px; }
  .plane-head span:nth-child(4) { width: 125px; }
  .plane-head span:nth-child(5) { padding-top: 4px; }
  .plane-grid { display: grid; grid-template-columns: 59px 20px 104px 58px 122px 1fr; grid-auto-rows: 25px; padding-left: 13px; align-items: start; }
  .plane-name { display: flex; align-items: flex-start; }
  .plane-name .opt { margin-top: 4px; gap: 2px; }
  .plane-line { padding-top: 2px; }
  .plane-grid .field { width: 48px; }
  .plane-grid .colour { margin-top: 1px; }
  .plane-slider { padding-top: 1px; }
  .plane-slider > :global(svg) { margin: 3px 10px 0 0; }
  .plane-sets { display: flex; gap: 8px; padding: 0 0 0 17px; margin-top: -1px; }
  .frame-set { --pt: 2px; --pl: 5px; width: 203px; height: 117px; display: grid; grid-template-columns: 45px 144px; grid-template-rows: 22px 26px 27px 22px; align-items: start; align-content: start; }
  .frame-set > span:not(.combo) { margin-top: -1px; }
  .frame-top { grid-column: 1 / 3; padding-left: 4px; }
  .frame-top.second { padding: 1px 0 0 45px; }

  /* group */
  .edit-mode { --pt: 3px; --pl: 5px; margin: 5px 0 0 11px; width: 170px; height: 33px; }
  .edit-mode .opt { width: 87px; }
  .para { margin: 7px 0 0 12px; line-height: 12px; height: 30px; }
  .list { margin: 0 0 0 14px; width: 300px; height: 185px; background: #808080; border: 1px solid #696969; box-shadow: inset 0 0 0 1px #a5a5a5, inset 0 -3px 0 #f0f0f0; padding: 2px; }
  .list-head { display: flex; height: 24px; background: #f0f0f0; border-top: 1px solid #fff; border-bottom: 1px solid #aaa; }
  .list-head span { width: 60px; padding: 4px 0 0 3px; border-right: 1px solid #a5a5a5; }
  .list-head .first { width: 70px; }
  .subgroup { --pl: 14px; margin: 18px 0 0 14px; width: 300px; height: 100px; }
  .sub-title { margin-top: 2px; height: 20px; }
  .sub-opts { display: flex; }
  .sub-opts .opt:nth-child(1) { width: 81px; }
  .sub-opts .opt:nth-child(2) { width: 90px; }

  /* pattern */
  .pattern-page { display: flex; padding: 5px 0 0 8px; align-items: flex-start; }
  .pattern-left { width: 222px; }
  .border-set { --pt: 8px; --pl: 6px; width: 201px; height: 173px; display: grid; grid-template-columns: 48px 140px; grid-template-rows: 28px 26px 25px 30px 21px 21px; align-items: start; align-content: start; }
  .border-set > span:not(.combo) { padding-top: 1px; }
  .border-set > span.join { padding-top: 2px; }
  .border-set > span.style-name { padding-top: 0; }
  .wide-cell { grid-column: 1 / 3; }
  .border-set .colour { margin: 0 1px; }
  .preview { margin-top: 83px; width: 200px; height: 110px; }
  .preview-frame { margin: 5px 0 0 32px; width: 92px; height: 100px; border: 5px solid #f0f0f0; padding: 10px 10px 0; }
  .preview-frame i { display: block; height: 80px; border: 2px solid #1031ff; background: linear-gradient(#1031ff, #0014c8 45px); }
  .fill-set { --pt: 4px; --pl: 11px; width: 260px; height: 74px; }
  .fill-set .inline > span:first-child { width: 64px; padding-top: 6px; }
  .alpha { display: flex; margin: 36px 0 0 4px; height: 32px; align-items: flex-start; }
  .alpha > span:first-child { width: 86px; padding-top: 1px; }
  .alpha > :global(svg) { margin: 2px 14px 0 0; }
  .alpha .pct { margin-top: 6px; }
  .grad-set { --pt: 11px; --pl: 13px; width: 260px; height: 200px; display: grid; grid-template-columns: 64px 160px; grid-template-rows: 27px 69px 40px; align-items: start; align-content: start; }
  .grad-set > span:not(.combo) { padding-top: 3px; }
  .lum { padding-left: 8px; }
  .lum > :global(svg) { margin: 2px 16px 0 0; }
  .blue-dir { width: 160px; height: 40px; padding-left: 4px; }
  .blue-dir .grad { width: 32px; height: 32px; background: linear-gradient(#1031ff 20%, #0014c8); }

  /* annotations */
  .badge { position: absolute; width: 20px; height: 20px; border-radius: 50%; background: #fb3838; color: #fff; text-align: center; font: 13.500px/19px "Noto Sans", sans-serif; font-feature-settings: normal; }
  .step { background: #3c96e6; }
  .frame { position: absolute; border: 3px solid #fb3838; }
  .remark { position: absolute; color: #fb3838; font: 16px/18px "Noto Sans CJK SC", sans-serif; font-feature-settings: normal; }
  .dot { position: absolute; left: 1472px; top: 613px; width: 4px; height: 4px; background: #fb3838; }
  .tip { position: absolute; height: 34px; padding-left: 6px; border-radius: 3px; background: #636363; color: #fff; font: 16px/33px "Noto Sans CJK SC", sans-serif; font-feature-settings: normal; }
  .tip::before { content: ""; position: absolute; left: -4px; top: 12px; border: solid transparent; border-width: 5px 4px 5px 0; border-right-color: #636363; }
  .tip-angle { left: 1454px; top: 514px; width: 114px; }
  .tip-size { left: 1730px; top: 441px; width: 140px; }
</style>
